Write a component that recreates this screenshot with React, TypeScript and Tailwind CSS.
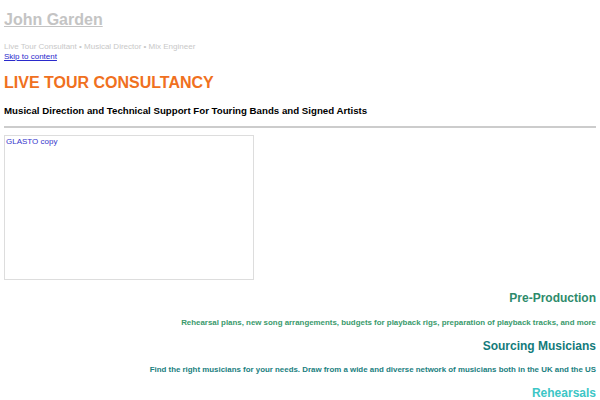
export default function App() {
  return (
    <div className="min-h-[400px] bg-white px-1 font-['Liberation_Sans',Arial,sans-serif]">
      <header className="pt-[10px]">
        <a href="#" className="block text-[16px] font-bold leading-[20px] text-[#c4c4c4] underline">
          John Garden
        </a>
        <p className="mt-[12px] text-[8px] leading-[10px] text-[#c8c8c8]">
          Live Tour Consultant • Musical Director • Mix Engineer
        </p>
        <a href="#" className="block text-[8px] leading-[10px] text-[#2a2acc] underline">
          Skip to content
        </a>
      </header>

      <h1 className="mt-[11px] text-[16px] font-bold leading-[20px] text-[#f07020]">
        LIVE TOUR CONSULTANCY
      </h1>
      <h2 className="mt-[12px] text-[9.7px] font-bold leading-[12px] text-black">
        Musical Direction and Technical Support For Touring Bands and Signed Artists
      </h2>
      <div className="mt-[9px] h-[2px] bg-[#cccccc]" />

      <div className="mt-[7px] h-[145px] w-[250px] border border-[#dddddd] px-[1px] pt-[1px] text-[8px] leading-[10px] text-[#3535cc]">
        GLASTO copy
      </div>

      <section className="text-right">
        <h3 className="mt-[10px] text-[12px] font-bold leading-[16px] text-[#2e8b6b]">Pre-Production</h3>
        <p className="mt-[12px] text-[7.9px] font-bold leading-[10px] text-[#3a9a6c]">
          Rehearsal plans, new song arrangements, budgets for playback rigs, preparation of playback tracks, and more
        </p>
        <h3 className="mt-[10px] text-[12px] font-bold leading-[16px] text-[#137b7b]">Sourcing Musicians</h3>
        <p className="mt-[11px] text-[7.9px] font-bold leading-[10px] text-[#1a8080]">
          Find the right musicians for your needs. Draw from a wide and diverse network of musicians both in the UK and the US
        </p>
        <h3 className="mt-[10px] text-[12px] font-bold leading-[16px] text-[#3cc6c6]">Rehearsals</h3>
      </section>
    </div>
  );
}
